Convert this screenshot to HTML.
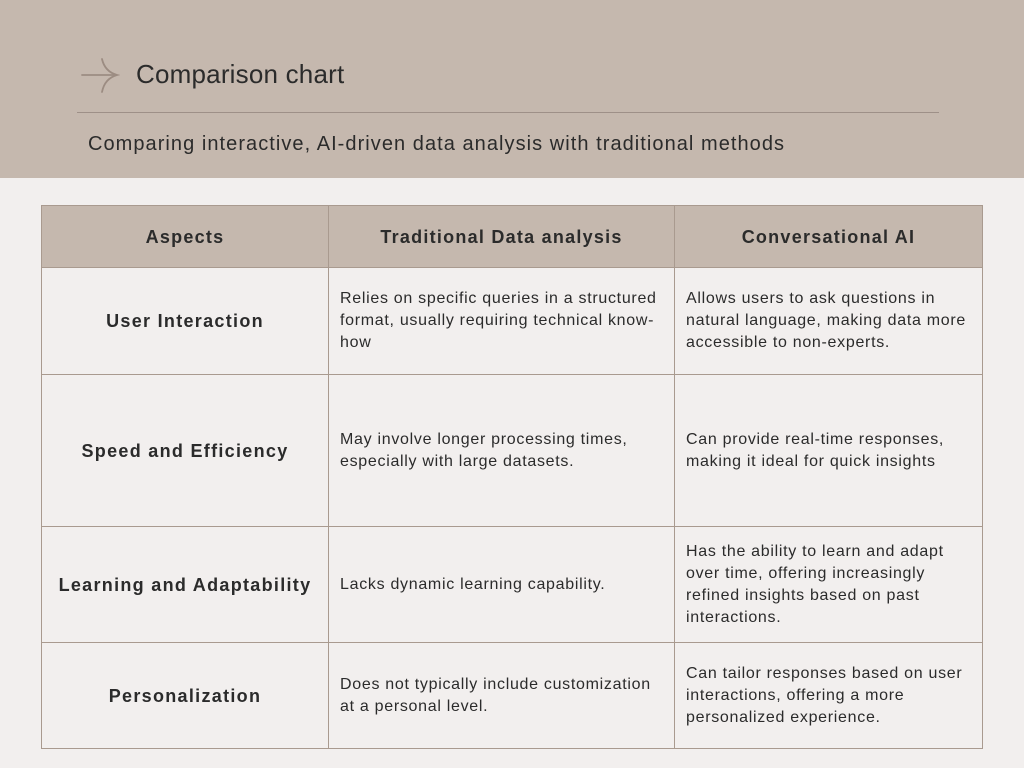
<!DOCTYPE html>
<html><head><meta charset="utf-8"><style>
*{margin:0;padding:0;box-sizing:border-box}
body{width:1024px;height:768px;background:#f2efee;font-family:"Liberation Sans",sans-serif;color:#2b2b2b;position:relative;overflow:hidden}
.band{position:absolute;left:0;top:0;width:1024px;height:178px;background:#c5b8ae}
.title{position:absolute;left:136px;top:58px;font-size:26px;line-height:32px;letter-spacing:0.2px}
.hr{position:absolute;left:77px;top:112px;width:862px;height:1px;background:#9e9088}
.sub{position:absolute;left:88px;top:131px;font-size:20px;line-height:26px;letter-spacing:1.05px;white-space:nowrap}
table{position:absolute;left:41px;top:205px;border-collapse:collapse}
td,th{border:1px solid #a99a8f;font-size:16px;line-height:22px;letter-spacing:0.7px}
th{background:#c5b8ae;font-size:18px;font-weight:bold;height:62px;letter-spacing:1.25px}
td.a{font-weight:bold;font-size:18px;text-align:center;letter-spacing:1.3px}
td.t{padding:0 11px;vertical-align:middle}
</style></head><body>
<div class="band"></div>
<svg style="position:absolute;left:80px;top:56px" width="40" height="40" viewBox="0 0 40 40" fill="none" stroke="#9c8c82" stroke-width="1.8" stroke-linecap="round"><path d="M2 19H36"/><path d="M22 3C24 12 30 17 37 19C30 21 24 26 22 36"/></svg>
<div class="title">Comparison chart</div>
<div class="hr"></div>
<div class="sub">Comparing interactive, AI-driven data analysis with traditional methods</div>
<table>
<tr><th style="width:287px">Aspects</th><th style="width:346px">Traditional Data analysis</th><th style="width:308px">Conversational AI</th></tr>
<tr style="height:107px"><td class="a">User Interaction</td><td class="t">Relies on specific queries in a structured<br>format, usually requiring technical know-<br>how</td><td class="t">Allows users to ask questions in<br>natural language, making data more<br>accessible to non-experts.</td></tr>
<tr style="height:152px"><td class="a">Speed and Efficiency</td><td class="t">May involve longer processing times,<br>especially with large datasets.</td><td class="t">Can provide real-time responses,<br>making it ideal for quick insights</td></tr>
<tr style="height:116px"><td class="a">Learning and Adaptability</td><td class="t">Lacks dynamic learning capability.</td><td class="t">Has the ability to learn and adapt<br>over time, offering increasingly<br>refined insights based on past<br>interactions.</td></tr>
<tr style="height:106px"><td class="a">Personalization</td><td class="t">Does not typically include customization<br>at a personal level.</td><td class="t">Can tailor responses based on user<br>interactions, offering a more<br>personalized experience.</td></tr>
</table>
</body></html>
